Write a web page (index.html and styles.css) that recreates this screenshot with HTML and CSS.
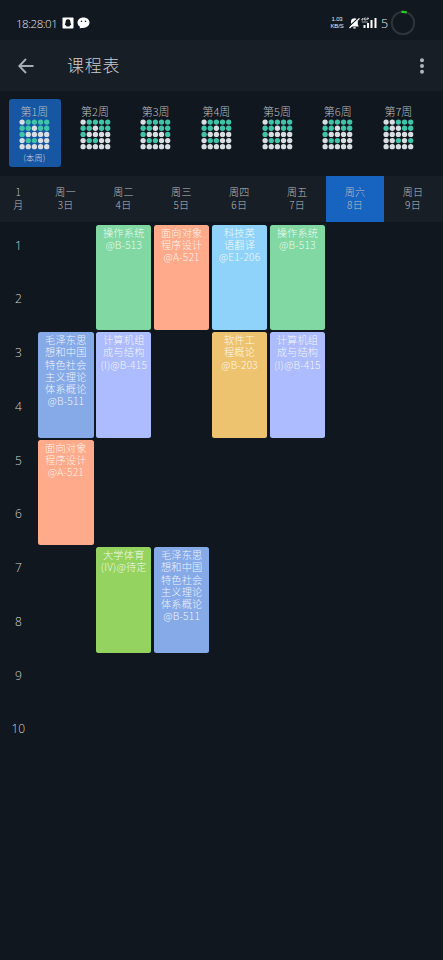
FILE: index.html
```
<!DOCTYPE html>
<html lang="zh-CN">
<head>
<meta charset="utf-8">
<meta name="viewport" content="width=device-width, initial-scale=1">
<title>课程表</title>
<link rel="stylesheet" href="styles.css">
</head>
<body>
<div class="status">
  <span class="clock">18:28:01</span>
  <svg class="qq" width="12" height="12" viewBox="0 0 12 12"><rect x=".5" y=".5" width="11" height="11" rx=".8" fill="#fff"/><path d="M6 2.300c-2 0-2.500 1.500-2.400 3L2.800 8l1 .2.8 1.300h2.800l.8-1.300 1-.2-.8-2.700C8.500 3.800 8 2.300 6 2.300z" fill="#111820"/></svg>
  <svg class="wechat" width="13" height="12" viewBox="0 0 13 12"><path d="M6.500.6C3 .6.500 2.900.500 5.600c0 1.900 1 3.200 2.500 4.200l-.3 1.500 2-.4c4.700.5 7.800-2.100 7.800-5.300C12.500 2.900 10 .6 6.500.6z" fill="#fff"/><circle cx="4.500" cy="4.200" r=".8" fill="#111820"/><circle cx="8.500" cy="4.200" r=".8" fill="#111820"/></svg>
  <span class="spacer"></span>
  <span class="speed"><span>1.03</span><span>KB/S</span></span>
  <svg class="bell" width="11" height="12" viewBox="0 0 11 12"><path d="M.8 9.500h9L8.800 7.500V4.500C8.800 2.500 7.500 1.300 5.500 1.300S2 2.500 2 4.500v3zM4.300 10.300h2.400v1.200H4.300z" fill="#fff"/><path d="M0 9.600 10 .6" stroke="#111820" stroke-width="1.300"/><path d="M.5 11 10.500 1.400" stroke="#fff" stroke-width="1.300"/></svg>
  <svg class="signal" width="16" height="12" viewBox="0 0 16 12"><path d="M2.500 8h2v3h-2zM6 6h2v5H6zM9.500 3h2v8h-2zM13.500 1h2v10h-2z" fill="#fff"/><path d="M.5 3h1.500V1L.5 3M5 1H3.500v2H5V2M6 3V1h1.500v1H6M.8 5h6" fill="none" stroke="#e5e8eb" stroke-width=".7"/></svg>
  <span class="level">5</span>
  <svg class="ring" width="26" height="26" viewBox="0 0 26 26"><circle cx="13" cy="13" r="11.200" fill="none" stroke="#2e343a" stroke-width="2"/><path d="M11.500 1.900A11.200 11.200 0 0 1 16.800 2.500" fill="none" stroke="#20d020" stroke-width="2.200"/></svg>
</div>
<header class="appbar">
  <svg class="back" width="16" height="16" viewBox="0 0 16 16"><path d="M15.500 8H1.500M8 1 1.300 8 8 15" fill="none" stroke="#a9adb1" stroke-width="1.900"/></svg>
  <h1>课程表</h1>
  <svg class="more" width="6" height="18" viewBox="0 0 6 18"><g fill="#b2b5b8"><circle cx="3" cy="3.300" r="2"/><circle cx="3" cy="9" r="2"/><circle cx="3" cy="14.700" r="2"/></g></svg>
</header>
<nav class="weeks" id="weeks"></nav>
<div class="days" id="days"></div>
<main class="table" id="table"></main>
<script src="app.js"></script>
</body>
</html>
```
FILE: styles.css
```
* { box-sizing: border-box; }
body {
  margin: 0;
  width: 443px;
  height: 960px;
  overflow: hidden;
  background: #10171e;
  color: #b9bdc1;
  font-family: "Noto Sans CJK SC", sans-serif;
  font-weight: 300;
}
svg { display: block; flex: none; }
.status {
  display: flex;
  align-items: center;
  height: 40px;
  padding: 6px 27px 0 16px;
  background: #111820;
  color: #e8eaec;
}
.clock { width: 45px; font-family: "Open Sans", sans-serif; font-size: 11.500px; letter-spacing: -.45px; white-space: nowrap; }
.qq { margin-left: 1px; }
.wechat { margin-left: 3px; }
.spacer { flex: 1; }
.speed {
  display: flex;
  flex-direction: column;
  width: 14px;
  font-family: "Liberation Sans", sans-serif;
  font-size: 6px;
  font-weight: 400;
  line-height: 7px;
  letter-spacing: -.2px;
  text-align: center;
}
.bell { margin-left: 5px; }
.signal { margin-left: 1px; }
.level { margin-left: 4px; width: 8px; font-family: "Open Sans", sans-serif; font-size: 12.500px; }
.ring { margin-left: 1px; }
.appbar {
  display: flex;
  align-items: center;
  height: 51px;
  padding: 0 18px;
  background: #171e26;
}
h1 { flex: 1; margin: -2px 0 0 33px; font-size: 17px; line-height: 24px; font-weight: 300; letter-spacing: .8px; color: #c9ccd0; }
.weeks { display: flex; height: 85px; padding: 8px 0 0 4.500px; }
.week {
  display: flex;
  flex-direction: column;
  align-items: center;
  flex: none;
  width: 51.800px;
  height: 68px;
  margin: 0 4.450px;
  padding: 5px 1px 0 0;
  border-radius: 3px;
  font-size: 11px;
  line-height: 15px;
}
.week.current { background: #1656a3; }
.dots { width: 31px; height: 31px; fill: #d9dee3; }
.dots .on { fill: #3fc4aa; }
.note { font-size: 8.500px; line-height: 14px; color: #c9d6e6; }
.days, .table { display: grid; grid-template-columns: 36.700px repeat(7, 57.900px); }
.days { height: 46px; background: #171e26; }
.day { padding-top: 10px; font-size: 10px; line-height: 12.500px; text-align: center; white-space: pre-line; letter-spacing: .3px; }
.day.today { background: #1764c0; }
.table { grid-template-rows: repeat(10, 53.750px); padding-top: 1.500px; }
.hour { grid-column: 1; padding-top: 13px; font-family: "Open Sans", sans-serif; font-size: 12px; line-height: 18px; text-align: center; color: #d0d3d6; }
.course {
  margin: 1px 1px 1px 1.500px;
  padding-top: 2px;
  border-radius: 2.500px;
  font-size: 10.200px;
  line-height: 12.300px;
  letter-spacing: .2px;
  text-align: center;
  white-space: pre-line;
  color: rgba(255, 255, 255, .88);
}
.green { background: #81d8a2; }
.coral { background: #ffaa8a; }
.sky { background: #90d3fa; }
.blue { background: #86aae8; }
.violet { background: #adbbff; }
.amber { background: #eec370; }
.lime { background: #95d360; }
```
FILE: app.js
```
const add = (parent, cls, text) => {
  const el = document.createElement('div');
  el.className = cls;
  if (text) el.textContent = text;
  parent.append(el);
  return el;
};

const dotGrid = (pattern) => {
  const circles = pattern.split(' ').flatMap((line, r) => [...line].map((bit, c) =>
    `<circle class="${bit === '1' ? 'on' : 'off'}" cx="${3.1 + c * 6.15}" cy="${3.1 + r * 6.15}" r="2.65"/>`));
  return `<svg class="dots" viewBox="0 0 31 31">${circles.join('')}</svg>`;
};

const regular = '01111 11011 10000 01100 00000';
const patterns = [regular, regular, '01111 11011 10001 01100 00000', regular, regular, regular, '00111 10011 00000 00101 00000'];
const weeks = document.getElementById('weeks');
patterns.forEach((pattern, i) => {
  const week = add(weeks, i ? 'week' : 'week current');
  add(week, 'name', `第${i + 1}周`);
  week.insertAdjacentHTML('beforeend', dotGrid(pattern));
  if (!i) add(week, 'note', '(本周)');
});

const days = document.getElementById('days');
add(days, 'day', '1\n月');
[...'一二三四五六日'].forEach((name, i) => add(days, i === 5 ? 'day today' : 'day', `周${name}\n${i + 3}日`));

const mao = '毛泽东思\n想和中国\n特色社会\n主义理论\n体系概论\n@B-511';
const oop = '面向对象\n程序设计\n@A-521';
const os = '操作系统\n@B-513';
const comp = '计算机组\n成与结构\n(I)@B-415';
const courses = [
  [2, 1, 'green', os], [3, 1, 'coral', oop], [4, 1, 'sky', '科技英\n语翻译\n@E1-206'], [5, 1, 'green', os],
  [1, 3, 'blue', mao], [2, 3, 'violet', comp], [4, 3, 'amber', '软件工\n程概论\n@B-203'], [5, 3, 'violet', comp],
  [1, 5, 'coral', oop], [2, 7, 'lime', '大学体育\n(IV)@待定'], [3, 7, 'blue', mao]
];
const table = document.getElementById('table');
for (let n = 1; n <= 10; n++) add(table, 'hour', String(n)).style.gridRow = n;
for (const [day, row, color, text] of courses) {
  add(table, `course ${color}`, text).style.gridArea = `${row} / ${day + 1} / span 2 / auto`;
}
```
